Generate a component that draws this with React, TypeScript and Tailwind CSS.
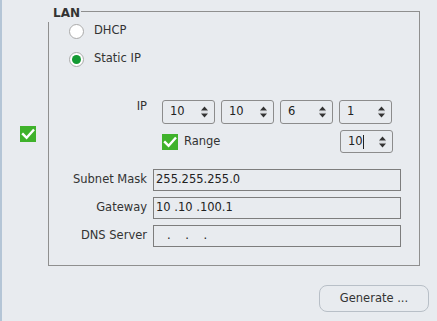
import React from "react";

const font = { fontFamily: '"DejaVu Sans", Verdana, sans-serif' };

function Check({ size = 16 }: { size?: number }) {
  return (
    <div className="bg-[#3fb22b] flex items-center justify-center" style={{ width: size, height: size }}>
      <svg width={size} height={size} viewBox="0 0 16 16">
        <path d="M3 8.2 L6.6 11.8 L13.2 4.4" fill="none" stroke="#ffffff" strokeWidth="2.4" strokeLinecap="square" />
      </svg>
    </div>
  );
}

function Radio({ checked }: { checked?: boolean }) {
  return (
    <div className="w-[15px] h-[15px] rounded-full border border-[#aaaaaa] bg-white flex items-center justify-center">
      {checked && <div className="w-[9px] h-[9px] rounded-full bg-[#139a33]" />}
    </div>
  );
}

function Spin({ value, cursor, h = 24 }: { value: string; cursor?: boolean; h?: number }) {
  return (
    <div
      className="w-[53px] rounded-[3px] border border-[#8c8c8c] flex items-center justify-between pl-[7px] pr-[5px]"
      style={{ height: h }}
    >
      <span className="text-[11.5px] text-[#222] flex items-center">
        {value}
        {cursor && <span className="inline-block w-px h-[14px] bg-[#222]" />}
      </span>
      <svg width="9" height="16" viewBox="0 0 9 16">
        <path d="M1 6.5 L4.5 2.5 L8 6.5 Z" fill="#333333" />
        <line x1="1" y1="8" x2="8" y2="8" stroke="#d2d5d9" strokeWidth="1" />
        <path d="M1 9.5 L4.5 13.5 L8 9.5 Z" fill="#333333" />
      </svg>
    </div>
  );
}

function Field({ label, value }: { label: string; value: string }) {
  return (
    <div className="flex items-center h-[22px]">
      <div className="w-[98px] text-right text-[11.5px] text-[#333]">{label}</div>
      <div className="ml-[6px] w-[248px] h-[22px] border border-[#7d7d7d] flex items-center pl-[2px] text-[11.5px] text-[#222] whitespace-pre">
        {value}
      </div>
    </div>
  );
}

export default function App() {
  return (
    <div className="w-[437px] h-[321px] bg-[#e8ebef] flex overflow-hidden" style={font}>
      <div className="w-[2px] h-full bg-[#b4c5d6]" />
      <div className="w-[435px] flex flex-col">
        <div className="flex">
          <div className="w-[46px] shrink-0 flex flex-col">
            <div className="mt-[126px] ml-[18px]">
              <Check size={16} />
            </div>
          </div>
          <div className="mt-[11px] w-[372px] shrink-0 h-[255px] border border-[#8f8f8f] flex flex-col">
            <div className="-ml-[1px] -mt-[8px] w-[33px] h-[18px] bg-[#e8ebef] pl-[5px] pt-[3px] text-[12px] font-bold text-[#333] leading-[12px]">
              LAN
            </div>
            <div className="flex items-center h-[28px] -mt-[5px] pl-[20px]">
              <Radio />
              <span className="ml-[10px] text-[11.5px] text-[#333]">DHCP</span>
            </div>
            <div className="flex items-center h-[28px] pl-[20px]">
              <Radio checked />
              <span className="ml-[10px] text-[11.5px] text-[#333]">Static IP</span>
            </div>
            <div className="flex mt-[27px] h-[24px]">
              <div className="w-[98px] text-right text-[11.5px] text-[#333] -mt-[2px]">IP</div>
              <div className="ml-[15px] flex gap-[6px]">
                <Spin value="10" />
                <Spin value="10" />
                <Spin value="6" />
                <Spin value="1" />
              </div>
            </div>
            <div className="flex mt-[6px] h-[23px] items-center">
              <div className="ml-[113px] flex items-center">
                <Check size={16} />
                <span className="ml-[6px] text-[11.5px] text-[#333]">Range</span>
              </div>
              <div className="ml-auto mr-[26px]">
                <Spin value="10" cursor h={23} />
              </div>
            </div>
            <div className="mt-[16px] flex flex-col gap-[6px]">
              <Field label="Subnet Mask" value="255.255.255.0" />
              <Field label="Gateway" value="10 .10 .100.1" />
              <Field label="DNS Server" value="   .    .    ." />
            </div>
          </div>
        </div>
        <div className="flex justify-end mt-[19px] mr-[8px]">
          <button className="w-[110px] h-[27px] rounded-[8px] border border-[#b8bfc7] bg-[#e8ebef] text-[11.5px] text-[#333]">
            Generate ...
          </button>
        </div>
      </div>
    </div>
  );
}
